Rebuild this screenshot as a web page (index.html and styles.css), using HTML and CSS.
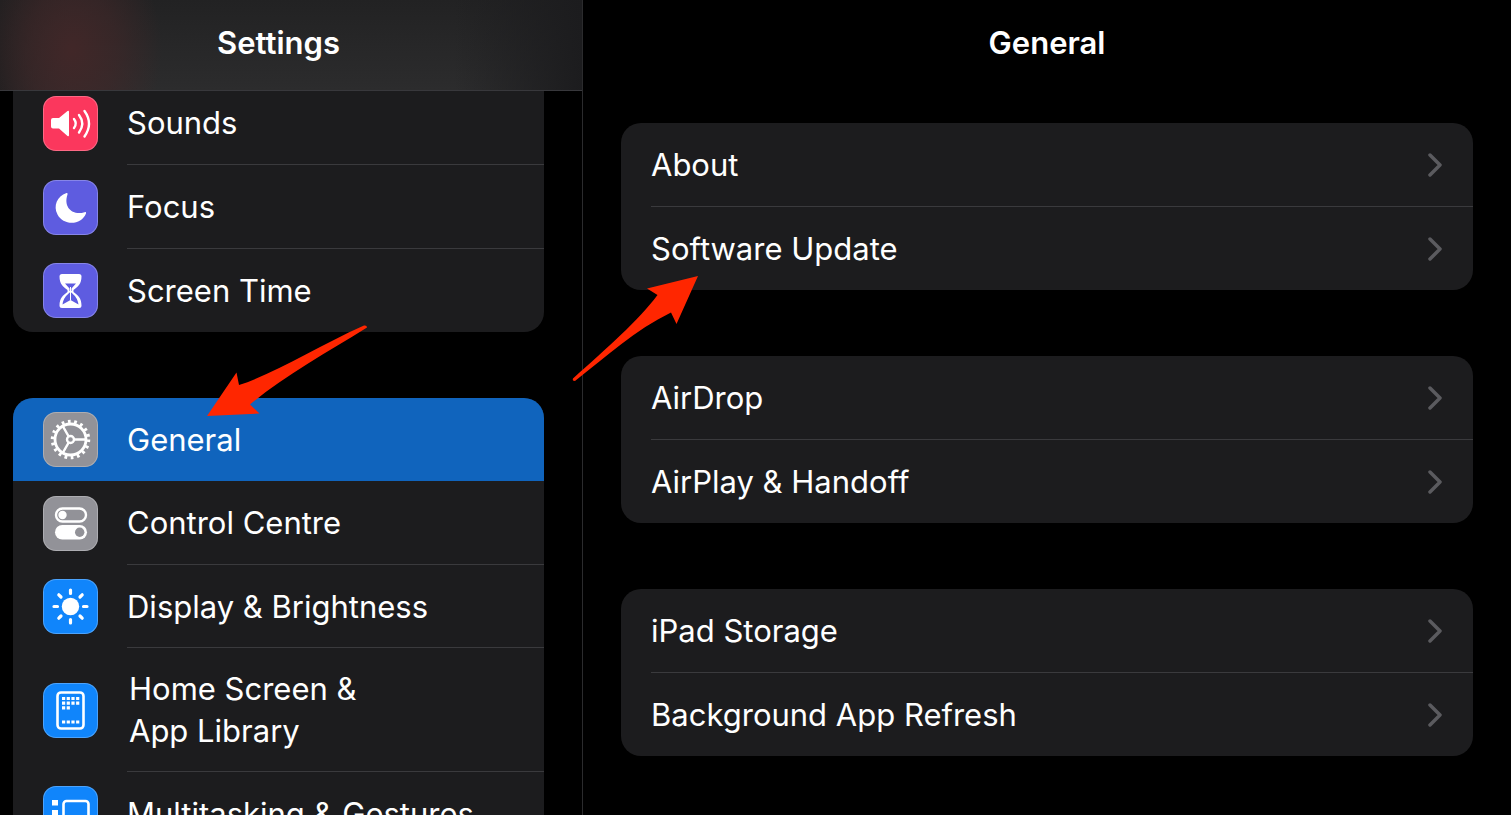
FILE: index.html
```html
<!DOCTYPE html>
<html lang="en-GB">
<head>
<meta charset="utf-8">
<title>Settings</title>
<link rel="stylesheet" href="styles.css">
</head>
<body>
<svg class="symbols" aria-hidden="true">
  <symbol id="chevron" viewBox="0 0 14 24"><path d="M2 2L12 12L2 22" fill="none" stroke="currentColor" stroke-width="3.500" stroke-linecap="round" stroke-linejoin="round"/></symbol>
</svg>
<div class="app">
  <nav class="sidebar" aria-label="Settings">
    <header class="bar sidebar-bar"><h1 class="title">Settings</h1></header>
    <div class="sidebar-list">
      <div class="card card-continued">
        <a class="item" href="#sounds">
          <svg class="icon red" viewBox="0 0 55 55" aria-hidden="true">
            <path d="M10 22H16L24.500 15Q26 14 26 16V39Q26 41 24.500 40L16 32.500H10Q8 32.500 8 30.500V24Q8 22 10 22Z" fill="#fff"/>
            <g fill="none" stroke="#fff" stroke-width="2.400" stroke-linecap="round"><path d="M31 23Q34.500 27.500 31 32"/><path d="M36 19Q42.500 27.500 36 36.500"/><path d="M41.500 15Q50.500 27.500 41.500 40.500"/></g>
          </svg>
          <span class="label">Sounds</span></a>
        <a class="item" href="#focus">
          <svg class="icon indigo" viewBox="0 0 55 55" aria-hidden="true"><path d="M23.500 13C14 16 10 26 14.500 34.500C20 45.500 38 46 43 33.500Q43.500 31.500 41.500 32.200C30 36 20 27.500 24.500 14.500Q25 12.500 23.500 13Z" fill="#fff"/></svg>
          <span class="label">Focus</span></a>
        <a class="item" href="#screen-time">
          <svg class="icon indigo" viewBox="0 0 55 55" aria-hidden="true">
            <path fill="#fff" fill-rule="evenodd" d="M19 11H36Q38.500 11 38.500 13.500C38.500 21 35 23.500 30.500 27V29C35 32.500 38.500 35 38.500 42.500Q38.500 45 36 45H19Q16.500 45 16.500 42.500C16.500 35 20 32.500 24.500 29V27C20 23.500 16.500 21 16.500 13.500Q16.500 11 19 11ZM26.700 29.500C23 33 20.500 35 19.500 41.500L27.500 37L35.500 41.500C34.500 35 32 33 28.300 29.500Z"/>
            <path fill="#5e5ce0" d="M22 20.500H33L28.500 25.500V28H26.500V25.500Z"/>
            <path fill="#fff" d="M27 24H28V37H27Z"/>
          </svg>
          <span class="label">Screen Time</span></a>
      </div>
      <div class="card">
        <a class="item selected" href="#general" aria-current="page">
          <svg class="icon gray" viewBox="0 0 55 55" aria-hidden="true">
            <g fill="none" stroke="#fff">
              <circle cx="27.500" cy="27.500" r="18" stroke-width="3.500" stroke-dasharray="2.700 3.583"/>
              <circle cx="27.500" cy="27.500" r="15.500" stroke-width="2.800"/>
              <circle cx="27.500" cy="27.500" r="3.500" stroke-width="2.400"/>
              <path stroke-width="2.500" d="M31 27.500H43M25.700 24.500L19.700 14M25.700 30.500L19.700 41"/>
            </g>
          </svg>
          <span class="label">General</span></a>
        <a class="item" href="#control-centre">
          <svg class="icon gray" viewBox="0 0 55 55" aria-hidden="true">
            <rect x="13" y="12.500" width="30" height="13" rx="6.500" fill="none" stroke="#fff" stroke-width="2.400"/><circle cx="19.500" cy="19" r="4.200" fill="#fff"/>
            <rect x="12" y="29" width="32" height="14.500" rx="7.250" fill="#fff"/><circle cx="36.700" cy="36.200" r="4.700" fill="#929298"/>
          </svg>
          <span class="label">Control Centre</span></a>
        <a class="item compact" href="#display">
          <svg class="icon blue" viewBox="0 0 55 55" aria-hidden="true">
            <circle cx="27.500" cy="27.500" r="8.700" fill="#fff"/>
            <path fill="none" stroke="#fff" stroke-width="3.200" stroke-linecap="round" d="M27.500 11V14.500M27.500 40.500V44M11 27.500H14.500M40.500 27.500H44M15.800 15.800L18 18M37 37L39.200 39.200M15.800 39.200L18 37M37 18L39.200 15.800"/>
          </svg>
          <span class="label">Display &amp; Brightness</span></a>
        <a class="item tall" href="#home-screen">
          <svg class="icon blue" viewBox="0 0 55 55" aria-hidden="true">
            <rect x="14.500" y="9.500" width="26" height="36" rx="3.500" fill="none" stroke="#fff" stroke-width="2.600"/>
            <path fill="none" stroke="#fff" stroke-width="3.200" stroke-dasharray="3.200 1.500" d="M19 15.500H36.500M19 20.200H36.500M19 24.900H27M19 39H36.500"/>
          </svg>
          <span class="label">Home Screen &amp;<br>App Library</span></a>
        <a class="item" href="#multitasking">
          <svg class="icon blue" viewBox="0 0 55 55" aria-hidden="true">
            <path fill="#fff" d="M9 14H15V19.500H9ZM9 24H15V29.500H9ZM9 34H15V39.500H9Z"/>
            <rect x="20.500" y="15" width="25" height="25" rx="3" fill="none" stroke="#fff" stroke-width="2.600"/>
          </svg>
          <span class="label">Multitasking &amp; Gestures</span></a>
      </div>
    </div>
  </nav>
  <main class="detail">
    <header class="bar"><h2 class="title">General</h2></header>
    <div class="detail-list">
      <div class="card">
        <a class="item" href="#about"><span class="label">About</span><svg class="chevron" aria-hidden="true"><use href="#chevron"/></svg></a>
        <a class="item" href="#software-update"><span class="label">Software Update</span><svg class="chevron" aria-hidden="true"><use href="#chevron"/></svg></a>
      </div>
      <div class="card">
        <a class="item" href="#airdrop"><span class="label">AirDrop</span><svg class="chevron" aria-hidden="true"><use href="#chevron"/></svg></a>
        <a class="item" href="#airplay"><span class="label">AirPlay &amp; Handoff</span><svg class="chevron" aria-hidden="true"><use href="#chevron"/></svg></a>
      </div>
      <div class="card">
        <a class="item" href="#storage"><span class="label">iPad Storage</span><svg class="chevron" aria-hidden="true"><use href="#chevron"/></svg></a>
        <a class="item" href="#background-refresh"><span class="label">Background App Refresh</span><svg class="chevron" aria-hidden="true"><use href="#chevron"/></svg></a>
      </div>
    </div>
  </main>
  <svg class="arrow arrow-general" viewBox="0 0 162 92" aria-hidden="true"><path fill="#ff2600" d="M1 91L30.500 47.500L33 60C70 48 110 22 158 .5Q161 0 161 2.500C120 28 75 53 44 79.500L53.500 88.500Z"/></svg>
  <svg class="arrow arrow-update" viewBox="0 0 126 106" aria-hidden="true"><path fill="#ff2600" d="M126 0L75 12.500L85.500 19C66 45 35 72 1 102.500Q0 105 3 105C35 80 63 54 99 36.500L104.500 48Z"/></svg>
</div>
</body>
</html>
```
FILE: styles.css
```css
* { box-sizing: border-box; }
body {
  margin: 0;
  background: #000;
  color: #fff;
  font-family: Inter, "Liberation Sans", sans-serif;
  font-size: 31px;
  line-height: 42px;
}
.symbols { display: none; }
.app {
  position: relative;
  display: grid;
  grid-template-columns: 583fr 928fr;
  height: 100vh;
  overflow: hidden;
}
.sidebar {
  border-right: 1px solid #2b2b2d;
  min-width: 0;
  overflow: hidden;
}
.bar {
  display: flex;
  align-items: center;
  justify-content: center;
  height: 91px;
  padding-bottom: 5px;
}
.sidebar-bar {
  position: relative;
  z-index: 1;
  padding-left: 13px;
  padding-right: 38px;
  border-bottom: 1px solid #38383c;
  background:
    radial-gradient(ellipse 90px 120px at 72px 50px, #412728 0%, #41272899 50%, #41272800 100%),
    linear-gradient(90deg, #1f1f20 0%, #28282900 12%, #28282900 78%, #1c1c1e 100%),
    linear-gradient(#222223, #2c2c2d);
}
.title {
  margin: 0;
  font-size: 31px;
  font-weight: 600;
}
.sidebar-list {
  display: flex;
  flex-direction: column;
  gap: 66px;
  margin-top: -10px;
  padding: 0 38px 0 13px;
}
.detail-list {
  display: flex;
  flex-direction: column;
  gap: 66px;
  padding: 32px 38px;
}
.card {
  border-radius: 20px;
  background: #1c1c1e;
  overflow: hidden;
}
.card-continued { border-radius: 0 0 20px 20px; }
.item {
  position: relative;
  display: flex;
  align-items: center;
  gap: 29px;
  height: 84px;
  padding: 0 31px 0 30px;
  color: inherit;
  text-decoration: none;
}
.item:last-child, .selected, .compact { height: 83px; }
.item:not(:last-child):not(.selected)::after {
  content: "";
  position: absolute;
  right: 0;
  bottom: 0;
  left: 30px;
  height: 1px;
  background: #3a3a3d;
}
.sidebar .item:not(:last-child)::after { left: 114px; }
.sidebar .tall { gap: 31px; height: 124px; }
.selected { background: #1064bd; }
.label { flex: 1; white-space: nowrap; }
.icon {
  flex: none;
  width: 55px;
  height: 55px;
  border-radius: 13px;
  box-shadow: inset 0 0 0 1px #ffffff40;
}
.red { background: #fb375d; }
.indigo { background: #5e5ce0; }
.gray { background: #929298; }
.blue { background: #1085fb; }
.chevron {
  flex: none;
  width: 14px;
  height: 24px;
  color: #5b5b5f;
}
.arrow { position: absolute; }
.arrow-general { left: 206px; top: 325px; width: 162px; height: 92px; }
.arrow-update { left: 572px; top: 276px; width: 126px; height: 106px; }
```
